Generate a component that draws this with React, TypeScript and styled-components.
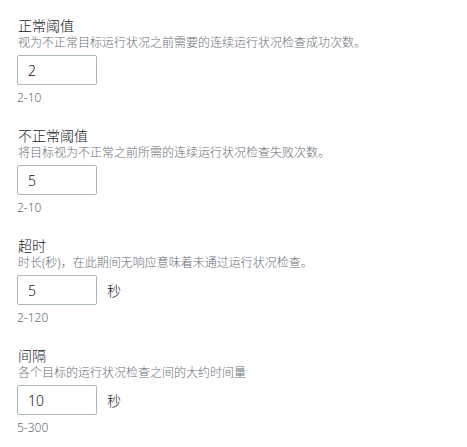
import React from "react";
import styled, { createGlobalStyle } from "styled-components";

const Global = createGlobalStyle`
  html, body { margin: 0; padding: 0; background: #ffffff; }
  body { font-family: "Noto Sans", "Noto Sans CJK SC", sans-serif; color: #16191f; }
`;

const Page = styled.div`
  display: flex;
  flex-direction: column;
  gap: 21px;
  padding: 17px 0 0 17px;
`;

const Field = styled.div`
  display: flex;
  flex-direction: column;
`;

const Label = styled.div`
  font-size: 14px;
  line-height: 18px;
  font-weight: 300;
  color: #16191f;
  padding-left: 1px;
`;

const Description = styled.div`
  font-size: 12px;
  line-height: 16px;
  font-weight: 300;
  color: #687078;
  padding-left: 1px;
`;

const Row = styled.div`
  display: flex;
  align-items: center;
  gap: 10px;
  margin-top: 4px;
`;

const Input = styled.input`
  box-sizing: border-box;
  width: 80px;
  height: 30px;
  border: 1px solid #aab7b8;
  border-radius: 2px;
  padding: 0 10px;
  font-family: "Noto Sans", "Noto Sans CJK SC", sans-serif;
  font-size: 14px;
  font-weight: 300;
  color: #16191f;
  background: #fff;
  outline: none;
`;

const Unit = styled.span`
  font-size: 14px;
  font-weight: 300;
  color: #16191f;
`;

const Hint = styled.div`
  font-size: 12px;
  line-height: 16px;
  font-weight: 300;
  color: #687078;
  margin-top: 5px;
`;

const fields = [
  { label: "正常阈值", desc: "视为不正常目标运行状况之前需要的连续运行状况检查成功次数。", value: "2", unit: "", hint: "2-10" },
  { label: "不正常阈值", desc: "将目标视为不正常之前所需的连续运行状况检查失败次数。", value: "5", unit: "", hint: "2-10" },
  { label: "超时", desc: "时长(秒)，在此期间无响应意味着未通过运行状况检查。", value: "5", unit: "秒", hint: "2-120" },
  { label: "间隔", desc: "各个目标的运行状况检查之间的大约时间量", value: "10", unit: "秒", hint: "5-300" },
];

export default function App() {
  return (
    <>
      <Global />
      <Page>
        {fields.map((f) => (
          <Field key={f.label}>
            <Label>{f.label}</Label>
            <Description>{f.desc}</Description>
            <Row>
              <Input defaultValue={f.value} />
              {f.unit && <Unit>{f.unit}</Unit>}
            </Row>
            <Hint>{f.hint}</Hint>
          </Field>
        ))}
      </Page>
    </>
  );
}
